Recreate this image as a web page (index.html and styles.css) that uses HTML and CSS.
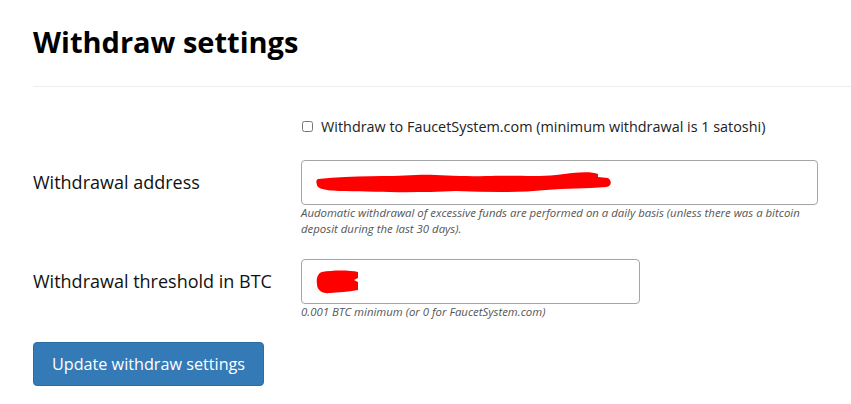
FILE: index.html
```html
<!DOCTYPE html>
<html lang="en">
<head>
    <meta charset="UTF-8">
    <title>Withdraw settings</title>
    <link rel="stylesheet" href="styles.css">
</head>
<body>
    <div class="page">
        <h1>Withdraw settings</h1>
        <hr class="divider">

        <form class="withdraw-form">
            <div class="row check-row">
                <div></div>
                <label class="check">
                    <input type="checkbox">
                    Withdraw to FaucetSystem.com (minimum withdrawal is 1 satoshi)
                </label>
            </div>

            <div class="row address-row">
                <label class="field-label">Withdrawal address</label>
                <div>
                    <div class="text-input">
                        <!-- zamazane -->
                        <svg class="scribble" width="296" height="24" viewBox="0 0 296 24">
                            <path d="M2 8 C 40 4, 70 6, 100 4 C 120 3, 140 6, 170 5 C 200 4, 220 6, 240 4 C 260 1, 275 0, 282 3 L 282 6 L 292 7 C 296 10, 296 15, 290 16 C 270 18, 250 17, 230 19 C 200 22, 170 21, 140 20 C 100 22, 60 21, 30 20 C 10 20, 2 18, 1 14 C 0 11, 0 9, 2 8 Z" fill="#ff0000"/>
                        </svg>
                    </div>
                    <p class="help">Audomatic withdrawal of excessive funds are performed on a daily basis (unless there was a bitcoin deposit during the last 30 days).</p>
                </div>
            </div>

            <div class="row threshold-row">
                <label class="field-label">Withdrawal threshold in BTC</label>
                <div>
                    <div class="text-input threshold">
                        <svg class="scribble" width="44" height="24" viewBox="0 0 44 24">
                            <path d="M6 2 C 16 0, 34 0, 42 2 L 42 8 L 38 10 L 42 12 L 42 20 C 32 22, 22 22, 14 23 C 6 24, 1 20, 1 14 C 0 8, 2 3, 6 2 Z" fill="#ff0000"/>
                        </svg>
                    </div>
                    <p class="help">0.001 BTC minimum (or 0 for FaucetSystem.com)</p>
                </div>
            </div>

            <button type="button" class="btn-primary">Update withdraw settings</button>
        </form>
    </div>
</body>
</html>
```

FILE: styles.css
```css
body {
    margin: 0;
    font-family: "Open Sans", "Liberation Sans", sans-serif;
    color: #111;
    background: #fff;
}
.page {
    padding: 0 0 0 33px;
}
h1 {
    font-size: 29px;
    font-weight: 700;
    margin: 0;
    padding-top: 22px;
    line-height: 40px;
    color: #000;
}
.divider {
    border: none;
    border-top: 1px solid #eee;
    margin: 24px 0 0 0;
}
.row {
    display: grid;
    grid-template-columns: 268px 517px;
    align-items: start;
}
.check-row {
    margin-top: 29px;
}
.address-row {
    margin-top: 24px;
}
.threshold-row {
    margin-top: 22px;
}
.check {
    display: flex;
    align-items: center;
    font-size: 14.4px;
    color: #222;
    height: 20px;
}
.check input {
    width: 11px;
    height: 11px;
    margin: 0 8px 0 1px;
}
.field-label {
    font-size: 18px;
    line-height: 45px;
    color: #111;
}
.text-input {
    box-sizing: border-box;
    height: 45px;
    border: 1px solid #a5a5a5;
    border-radius: 4px;
    display: flex;
    align-items: center;
    padding-left: 14px;
}
.threshold {
    width: 339px;
}
.help {
    font-size: 11.4px;
    font-style: italic;
    color: #555;
    line-height: 16px;
    margin: 0;
}
.btn-primary {
    display: block;
    margin-top: 22px;
    width: 231px;
    height: 44px;
    background: #337ab7;
    border: 1px solid #2e6da4;
    border-radius: 4px;
    color: #fff;
    font-family: "Open Sans", "Liberation Sans", sans-serif;
    font-size: 16.2px;
}
```
